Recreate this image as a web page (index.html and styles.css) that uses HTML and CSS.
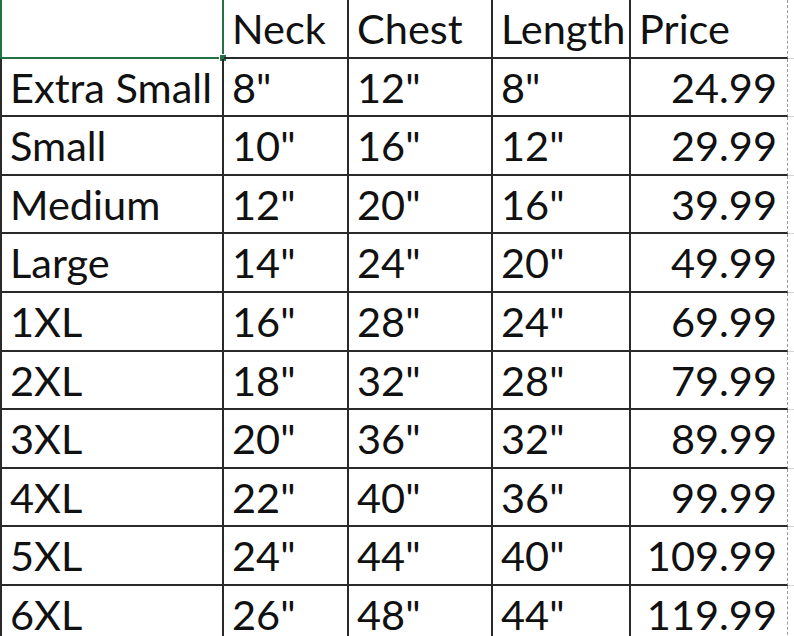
FILE: index.html
```html
<!DOCTYPE html>
<html>
<head>
<meta charset="utf-8">
<link rel="stylesheet" href="styles.css">
</head>
<body>
<div class="sheet">
  <div class="cell first"><span class="sel"><span class="handle"></span></span></div>
  <div class="cell">Neck</div>
  <div class="cell">Chest</div>
  <div class="cell">Length</div>
  <div class="cell last">Price</div>
  <div class="cell pad"></div>

  <div class="cell first">Extra Small</div><div class="cell">8"</div><div class="cell">12"</div><div class="cell">8"</div><div class="cell last num">24.99</div><div class="cell pad"></div>
  <div class="cell first">Small</div><div class="cell">10"</div><div class="cell">16"</div><div class="cell">12"</div><div class="cell last num">29.99</div><div class="cell pad"></div>
  <div class="cell first">Medium</div><div class="cell">12"</div><div class="cell">20"</div><div class="cell">16"</div><div class="cell last num">39.99</div><div class="cell pad"></div>
  <div class="cell first">Large</div><div class="cell">14"</div><div class="cell">24"</div><div class="cell">20"</div><div class="cell last num">49.99</div><div class="cell pad"></div>
  <div class="cell first">1XL</div><div class="cell">16"</div><div class="cell">28"</div><div class="cell">24"</div><div class="cell last num">69.99</div><div class="cell pad"></div>
  <div class="cell first">2XL</div><div class="cell">18"</div><div class="cell">32"</div><div class="cell">28"</div><div class="cell last num">79.99</div><div class="cell pad"></div>
  <div class="cell first">3XL</div><div class="cell">20"</div><div class="cell">36"</div><div class="cell">32"</div><div class="cell last num">89.99</div><div class="cell pad"></div>
  <div class="cell first">4XL</div><div class="cell">22"</div><div class="cell">40"</div><div class="cell">36"</div><div class="cell last num">99.99</div><div class="cell pad"></div>
  <div class="cell first">5XL</div><div class="cell">24"</div><div class="cell">44"</div><div class="cell">40"</div><div class="cell last num">109.99</div><div class="cell pad"></div>
  <div class="cell first">6XL</div><div class="cell">26"</div><div class="cell">48"</div><div class="cell">44"</div><div class="cell last num">119.99</div><div class="cell pad"></div>
</div>
</body>
</html>
```
FILE: styles.css
```css
html, body {
  margin: 0;
  padding: 0;
  background: #fff;
  overflow: hidden;
}
.sheet {
  display: grid;
  grid-template-columns: 224px 125px 144px 138px 157px 1fr;
  grid-auto-rows: 58.6px;
  width: 794px;
  font-family: Lato, "Open Sans", sans-serif;
  font-size: 41.5px;
  color: #111;
}
.cell {
  position: relative;
  box-sizing: border-box;
  border-right: 2px solid #2a2a2a;
  border-bottom: 2px solid #2a2a2a;
  padding: 0 8px 7px 8px;
  display: flex;
  align-items: flex-end;
  white-space: nowrap;
  line-height: 1;
}
.first {
  border-left: 2px solid #2a2a2a;
  padding-left: 8px;
}
.last {
  border-right: 1px dashed #9a9a9a;
}
.num {
  justify-content: flex-end;
  padding-right: 10px;
}
.pad {
  border-right: none;
  border-bottom: 1px solid #d4d4d4;
}
.sel {
  position: absolute;
  left: -2px;
  top: -4px;
  right: -2px;
  bottom: -2px;
  border: 2px solid #217346;
}
.handle {
  position: absolute;
  right: -5px;
  bottom: -5px;
  width: 6px;
  height: 6px;
  background: #217346;
  border: 1px solid #fff;
}
```
